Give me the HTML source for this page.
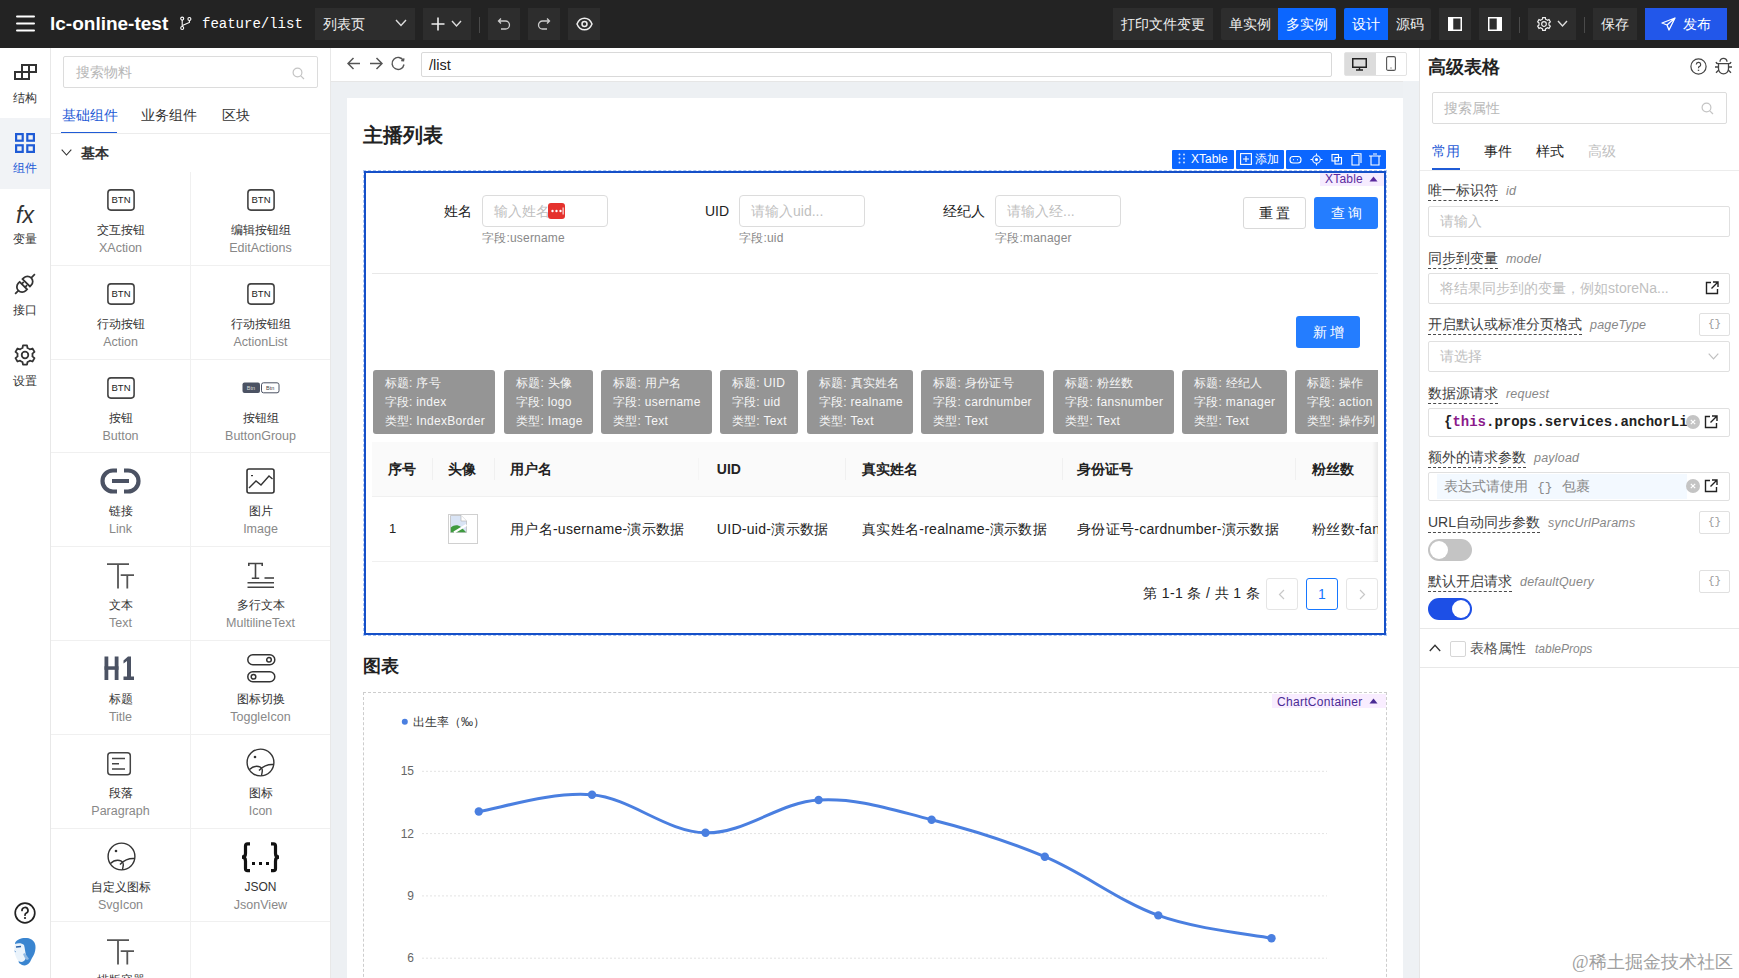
<!DOCTYPE html>
<html><head><meta charset="utf-8">
<style>
*{box-sizing:border-box;margin:0;padding:0}
html,body{width:1739px;height:978px;overflow:hidden;background:#fff;font-family:"Liberation Sans",sans-serif;color:#1d2129;font-size:14px}
.abs{position:absolute}
#top{position:absolute;left:0;top:0;width:1739px;height:48px;background:#232323;color:#fff}
.tb{position:absolute;top:8px;height:32px;background:#2d2d2d;border-radius:0;color:#f0f0f0;font-size:14px;font-weight:500;line-height:32px;text-align:center}
.tb.blue{background:#0b66ff;color:#fff}
.sep{position:absolute;top:17px;width:1px;height:16px;background:#4a4a4a}
#rail{position:absolute;left:0;top:48px;width:51px;height:930px;background:#fff;border-right:1px solid #e8e8e8}
.ri{position:absolute;left:0;width:50px;height:71px;text-align:center;font-size:12px;color:#333}
.ri .lb{position:absolute;left:0;width:50px;top:43px;line-height:14px}
#panel{position:absolute;left:51px;top:48px;width:280px;height:930px;background:#fff;border-right:1px solid #e8e8e8}
#canvas{position:absolute;left:331px;top:48px;width:1089px;height:930px;background:#edf0f3}
#right{position:absolute;left:1419px;top:48px;width:320px;height:930px;background:#fff;border-left:1px solid #e6e6e6}
</style></head><body>
<div id="top">
<svg class="abs" style="left:16px;top:15px" width="19" height="17" viewBox="0 0 19 17"><g stroke="#fff" stroke-width="2" stroke-linecap="round"><line x1="1" y1="1.5" x2="18" y2="1.5"/><line x1="1" y1="8.5" x2="18" y2="8.5"/><line x1="1" y1="15.5" x2="18" y2="15.5"/></g></svg>
<div class="abs" style="left:50px;top:12px;font-size:19px;font-weight:bold;line-height:24px;letter-spacing:0;color:#fff">lc-online-test</div>
<svg class="abs" style="left:179px;top:16px" width="13" height="15" viewBox="0 0 13 15"><g stroke="#fff" stroke-width="1.1" fill="none"><circle cx="3.2" cy="2.6" r="1.5"/><circle cx="3.2" cy="12" r="1.5"/><circle cx="10.4" cy="3" r="1.5"/><line x1="3.2" y1="4.1" x2="3.2" y2="10.5"/><path d="M10.4 4.5 V6.5 L3.4 9.5"/></g></svg>
<div class="abs" style="left:202px;top:14px;font-family:'Liberation Mono',monospace;font-size:14px;line-height:20px;color:#fff">feature/list</div>
<div class="tb" style="left:315px;width:100px;text-align:left;padding-left:8px">列表页</div>
<svg class="abs" style="left:395px;top:19px" width="12" height="8" viewBox="0 0 12 8"><path d="M1 1 L6 6.5 L11 1" stroke="#ddd" stroke-width="1.4" fill="none"/></svg>
<div class="tb" style="left:423px;width:48px"></div>
<svg class="abs" style="left:431px;top:17px" width="14" height="14" viewBox="0 0 14 14"><path d="M7 0.5V13.5M0.5 7H13.5" stroke="#eee" stroke-width="1.6"/></svg>
<svg class="abs" style="left:451px;top:20px" width="11" height="8" viewBox="0 0 11 8"><path d="M1 1 L5.5 6 L10 1" stroke="#ddd" stroke-width="1.4" fill="none"/></svg>
<div class="sep" style="left:479px"></div>
<div class="tb" style="left:488px;width:32px"></div>
<svg class="abs" style="left:497px;top:17px" width="14" height="14" viewBox="0 0 14 14"><path d="M4 1.5 L1.5 4 L4 6.5 M1.8 4 H8.5 A4 4 0 0 1 8.5 12 H4" stroke="#ccc" stroke-width="1.3" fill="none"/></svg>
<div class="tb" style="left:528px;width:32px"></div>
<svg class="abs" style="left:537px;top:17px" width="14" height="14" viewBox="0 0 14 14"><path d="M10 1.5 L12.5 4 L10 6.5 M12.2 4 H5.5 A4 4 0 0 0 5.5 12 H10" stroke="#ccc" stroke-width="1.3" fill="none"/></svg>
<div class="tb" style="left:568px;width:32px"></div>
<svg class="abs" style="left:576px;top:17px" width="17" height="14" viewBox="0 0 17 14"><path d="M1 7 C3 2 6 1.2 8.5 1.2 C11 1.2 14 2 16 7 C14 12 11 12.8 8.5 12.8 C6 12.8 3 12 1 7Z" stroke="#eee" stroke-width="1.5" fill="none"/><circle cx="8.5" cy="7" r="2.5" stroke="#eee" stroke-width="1.5" fill="none"/></svg>

<div class="tb" style="left:1113px;width:100px">打印文件变更</div>
<div class="tb" style="left:1221px;width:57px;border-radius:2px 0 0 2px">单实例</div>
<div class="tb blue" style="left:1278px;width:58px;border-radius:0 2px 2px 0">多实例</div>
<div class="tb blue" style="left:1344px;width:44px;border-radius:2px 0 0 2px">设计</div>
<div class="tb" style="left:1388px;width:43px;border-radius:0 2px 2px 0">源码</div>
<div class="tb" style="left:1439px;width:32px"></div>
<svg class="abs" style="left:1448px;top:17px" width="14" height="14" viewBox="0 0 14 14"><rect x="0.75" y="0.75" width="12.5" height="12.5" stroke="#fff" stroke-width="1.5" fill="none"/><rect x="0.75" y="0.75" width="4.5" height="12.5" fill="#fff"/></svg>
<div class="tb" style="left:1479px;width:32px"></div>
<svg class="abs" style="left:1488px;top:17px" width="14" height="14" viewBox="0 0 14 14"><rect x="0.75" y="0.75" width="12.5" height="12.5" stroke="#fff" stroke-width="1.5" fill="none"/><rect x="8.75" y="0.75" width="4.5" height="12.5" fill="#fff"/></svg>
<div class="sep" style="left:1519px"></div>
<div class="tb" style="left:1528px;width:48px"></div>
<svg class="abs" style="left:1536px;top:16px" width="16" height="16" viewBox="0 0 24 24"><path fill="none" stroke="#eee" stroke-width="1.8" d="M12 15.5a3.5 3.5 0 1 0 0-7 3.5 3.5 0 0 0 0 7z"/><path fill="none" stroke="#eee" stroke-width="1.8" d="M19.4 13.5a7.8 7.8 0 0 0 0-3l2.1-1.6-2-3.5-2.5 1a7.7 7.7 0 0 0-2.6-1.5L14 2.3h-4l-.4 2.6A7.7 7.7 0 0 0 7 6.4l-2.5-1-2 3.5 2.1 1.6a7.8 7.8 0 0 0 0 3l-2.1 1.6 2 3.5 2.5-1a7.7 7.7 0 0 0 2.6 1.5l.4 2.6h4l.4-2.6a7.7 7.7 0 0 0 2.6-1.5l2.5 1 2-3.5z"/></svg>
<svg class="abs" style="left:1557px;top:20px" width="11" height="8" viewBox="0 0 11 8"><path d="M1 1 L5.5 6 L10 1" stroke="#ddd" stroke-width="1.4" fill="none"/></svg>
<div class="sep" style="left:1584px"></div>
<div class="tb" style="left:1593px;width:44px">保存</div>
<div class="tb blue" style="left:1645px;width:82px;background:#2257ea"></div>
<svg class="abs" style="left:1661px;top:17px" width="15" height="14" viewBox="0 0 15 14"><path d="M14 1 L1 6 L6 8 L8 13 Z M6 8 L14 1" stroke="#fff" stroke-width="1.3" fill="none" stroke-linejoin="round"/></svg>
<div class="abs" style="left:1683px;top:8px;line-height:32px;font-size:14px;color:#fff">发布</div>
</div>
<div id="rail">
<svg class="abs" style="left:14px;top:16px" width="23" height="17" viewBox="0 0 23 17"><g stroke="#333" stroke-width="2" fill="none"><rect x="8" y="1" width="7" height="7"/><rect x="15" y="1" width="7" height="7"/><rect x="1" y="8" width="7" height="7"/><rect x="8" y="8" width="7" height="7"/></g></svg>
<div class="abs" style="left:0;top:43px;width:50px;text-align:center;font-size:12px;line-height:14px;color:#333">结构</div>
<div class="abs" style="left:0;top:70px;width:50px;height:71px;background:#f1f3f6"></div>
<svg class="abs" style="left:15px;top:85px" width="20" height="20" viewBox="0 0 20 20"><g stroke="#1f5bd6" stroke-width="2.2" fill="none"><rect x="1.1" y="1.1" width="6.6" height="6.6"/><rect x="12.3" y="1.1" width="6.6" height="6.6"/><rect x="1.1" y="12.3" width="6.6" height="6.6"/><rect x="12.3" y="12.3" width="6.6" height="6.6"/></g></svg>
<div class="abs" style="left:0;top:113px;width:50px;text-align:center;font-size:12px;line-height:14px;color:#1f5bd6">组件</div>
<div class="abs" style="left:0;top:155px;width:50px;text-align:center;font-family:'Liberation Sans',sans-serif;font-style:italic;font-size:23px;line-height:24px;color:#333">fx</div>
<div class="abs" style="left:0;top:184px;width:50px;text-align:center;font-size:12px;line-height:14px;color:#333">变量</div>
<svg class="abs" style="left:11px;top:222px" width="28" height="28" viewBox="0 0 24 24"><g transform="rotate(-45 12 12)" stroke="#333" stroke-width="1.5" fill="none"><path d="M0 12 H4"/><path d="M10 7.5 V16.5 H8.5 A4.5 4.5 0 0 1 8.5 7.5 Z"/><path d="M10 10 H12.5 M10 14 H12.5"/><path d="M13.5 7.5 V16.5 H15 A4.5 4.5 0 0 0 15 7.5 Z"/><path d="M19.5 12 H24"/></g></svg>
<div class="abs" style="left:0;top:255px;width:50px;text-align:center;font-size:12px;line-height:14px;color:#333">接口</div>
<svg class="abs" style="left:13px;top:295px" width="24" height="24" viewBox="0 0 24 24"><path fill="none" stroke="#333" stroke-width="1.8" d="M12 15.3a3.3 3.3 0 1 0 0-6.6 3.3 3.3 0 0 0 0 6.6z"/><path fill="none" stroke="#333" stroke-width="1.8" stroke-linejoin="round" d="M19.4 13.4a7.8 7.8 0 0 0 0-2.8l2.1-1.7-2-3.4-2.6.9a7.7 7.7 0 0 0-2.4-1.4L14 2.3h-4l-.5 2.7A7.7 7.7 0 0 0 7.1 6.4l-2.6-.9-2 3.4 2.1 1.7a7.8 7.8 0 0 0 0 2.8l-2.1 1.7 2 3.4 2.6-.9a7.7 7.7 0 0 0 2.4 1.4l.5 2.7h4l.5-2.7a7.7 7.7 0 0 0 2.4-1.4l2.6.9 2-3.4z"/></svg>
<div class="abs" style="left:0;top:326px;width:50px;text-align:center;font-size:12px;line-height:14px;color:#333">设置</div>
<svg class="abs" style="left:14px;top:854px" width="22" height="22" viewBox="0 0 22 22"><circle cx="11" cy="11" r="9.8" stroke="#222" stroke-width="1.7" fill="none"/><path d="M8 8.5 A3 3 0 1 1 12 11.3 C11.2 11.7 11 12.2 11 13.2" stroke="#222" stroke-width="1.7" fill="none" stroke-linecap="round"/><circle cx="11" cy="16" r="1.1" fill="#222"/></svg>
<svg class="abs" style="left:13px;top:889px" width="24" height="30" viewBox="0 0 24 30"><path d="M2 6 C4 2 9 0.5 14 1 C19 1.5 23 5 22.5 11 C22.3 15 21 18 19 21 L17 25 C15 28 12 29 9 28 L6 26 C5 24 6 22 8 21 C6 20 4 18 3 14 Z" fill="#3a85d0"/><path d="M2 7 C5 6 9 6 11 8 C12 11 12 15 13 18 C13.5 21 12 24 9 25 C6 25 4 23 3 20 C1.5 17 1 13 1.5 10 Z" fill="#eaf3fb"/><path d="M3 10 L8 9.5" stroke="#2c62a8" stroke-width="1.4"/><path d="M10 17 C11 19 12 22 14 23 L16 22 C15 20 13 18 12 16Z" fill="#8fb9e3"/><path d="M1.5 14 L3 15" stroke="#7aa6d6" stroke-width="1"/></svg>
</div>
<div id="panel"><div class="abs" style="left:12px;top:8px;width:255px;height:32px;border:1px solid #dcdcdc;border-radius:2px"></div>
<div class="abs" style="left:25px;top:14px;font-size:14px;line-height:20px;color:#b8b8b8">搜索物料</div>
<svg class="abs" style="left:241px;top:19px" width="13" height="13" viewBox="0 0 13 13"><circle cx="5.5" cy="5.5" r="4.4" stroke="#c4c4c4" stroke-width="1.2" fill="none"/><path d="M8.8 8.8 L12 12" stroke="#c4c4c4" stroke-width="1.2"/></svg>
<div class="abs" style="left:11px;top:57px;font-size:14px;line-height:20px;color:#1f5bd6;font-weight:500">基础组件</div>
<div class="abs" style="left:10px;top:84px;width:56px;height:2px;background:#1f5bd6"></div>
<div class="abs" style="left:90px;top:57px;font-size:14px;line-height:20px;color:#333">业务组件</div>
<div class="abs" style="left:171px;top:57px;font-size:14px;line-height:20px;color:#333">区块</div>
<div class="abs" style="left:0;top:85px;width:279px;height:1px;background:#ececec"></div>
<svg class="abs" style="left:10px;top:101px" width="11" height="7" viewBox="0 0 11 7"><path d="M0.7 0.7 L5.5 6 L10.3 0.7" stroke="#333" stroke-width="1.1" fill="none"/></svg>
<div class="abs" style="left:30px;top:95px;font-size:14px;line-height:20px;font-weight:bold;color:#333">基本</div>

<div class="abs" style="left:0px;top:124.0px;width:140px;height:93.8px;border-right:1px solid #f0f0f0;border-bottom:1px solid #f0f0f0"></div>
<div class="abs" style="left:140px;top:124.0px;width:139px;height:93.8px;border-bottom:1px solid #f0f0f0"></div>
<div class="abs" style="left:0px;top:217.8px;width:140px;height:93.8px;border-right:1px solid #f0f0f0;border-bottom:1px solid #f0f0f0"></div>
<div class="abs" style="left:140px;top:217.8px;width:139px;height:93.8px;border-bottom:1px solid #f0f0f0"></div>
<div class="abs" style="left:0px;top:311.6px;width:140px;height:93.8px;border-right:1px solid #f0f0f0;border-bottom:1px solid #f0f0f0"></div>
<div class="abs" style="left:140px;top:311.6px;width:139px;height:93.8px;border-bottom:1px solid #f0f0f0"></div>
<div class="abs" style="left:0px;top:405.4px;width:140px;height:93.8px;border-right:1px solid #f0f0f0;border-bottom:1px solid #f0f0f0"></div>
<div class="abs" style="left:140px;top:405.4px;width:139px;height:93.8px;border-bottom:1px solid #f0f0f0"></div>
<div class="abs" style="left:0px;top:499.2px;width:140px;height:93.8px;border-right:1px solid #f0f0f0;border-bottom:1px solid #f0f0f0"></div>
<div class="abs" style="left:140px;top:499.2px;width:139px;height:93.8px;border-bottom:1px solid #f0f0f0"></div>
<div class="abs" style="left:0px;top:593.0px;width:140px;height:93.8px;border-right:1px solid #f0f0f0;border-bottom:1px solid #f0f0f0"></div>
<div class="abs" style="left:140px;top:593.0px;width:139px;height:93.8px;border-bottom:1px solid #f0f0f0"></div>
<div class="abs" style="left:0px;top:686.8px;width:140px;height:93.8px;border-right:1px solid #f0f0f0;border-bottom:1px solid #f0f0f0"></div>
<div class="abs" style="left:140px;top:686.8px;width:139px;height:93.8px;border-bottom:1px solid #f0f0f0"></div>
<div class="abs" style="left:0px;top:780.6px;width:140px;height:93.8px;border-right:1px solid #f0f0f0;border-bottom:1px solid #f0f0f0"></div>
<div class="abs" style="left:140px;top:780.6px;width:139px;height:93.8px;border-bottom:1px solid #f0f0f0"></div>
<div class="abs" style="left:0px;top:874.4px;width:140px;height:93.8px;border-right:1px solid #f0f0f0;border-bottom:1px solid #f0f0f0"></div>
<div class="abs" style="left:140px;top:874.4px;width:139px;height:93.8px;border-bottom:1px solid #f0f0f0"></div>
<div class="abs" style="left:56px;top:141px"><svg width="28" height="22" viewBox="0 0 28 22"><rect x="0.9" y="0.9" width="26.2" height="20.2" rx="3" stroke="#444" stroke-width="1.6" fill="none"/><text x="14" y="14.2" text-anchor="middle" font-family="Liberation Sans" font-size="9.5" fill="#222">BTN</text></svg></div>
<div class="abs" style="left:196px;top:141px"><svg width="28" height="22" viewBox="0 0 28 22"><rect x="0.9" y="0.9" width="26.2" height="20.2" rx="3" stroke="#444" stroke-width="1.6" fill="none"/><text x="14" y="14.2" text-anchor="middle" font-family="Liberation Sans" font-size="9.5" fill="#222">BTN</text></svg></div>
<div class="abs" style="left:56px;top:235px"><svg width="28" height="22" viewBox="0 0 28 22"><rect x="0.9" y="0.9" width="26.2" height="20.2" rx="3" stroke="#444" stroke-width="1.6" fill="none"/><text x="14" y="14.2" text-anchor="middle" font-family="Liberation Sans" font-size="9.5" fill="#222">BTN</text></svg></div>
<div class="abs" style="left:196px;top:235px"><svg width="28" height="22" viewBox="0 0 28 22"><rect x="0.9" y="0.9" width="26.2" height="20.2" rx="3" stroke="#444" stroke-width="1.6" fill="none"/><text x="14" y="14.2" text-anchor="middle" font-family="Liberation Sans" font-size="9.5" fill="#222">BTN</text></svg></div>
<div class="abs" style="left:56px;top:329px"><svg width="28" height="22" viewBox="0 0 28 22"><rect x="0.9" y="0.9" width="26.2" height="20.2" rx="3" stroke="#444" stroke-width="1.6" fill="none"/><text x="14" y="14.2" text-anchor="middle" font-family="Liberation Sans" font-size="9.5" fill="#222">BTN</text></svg></div>
<div class="abs" style="left:191px;top:333px"><svg width="38" height="12" viewBox="0 0 38 12"><rect x="0.5" y="0.5" width="17.5" height="10.5" rx="2" fill="#4b5263"/><text x="9" y="8" text-anchor="middle" font-family="Liberation Sans" font-size="5.5" fill="#ddd">Btn</text><rect x="19.5" y="0.8" width="17.5" height="10" rx="2" stroke="#4b5263" stroke-width="1" fill="#fff"/><text x="28.2" y="8" text-anchor="middle" font-family="Liberation Sans" font-size="5.5" fill="#444">Btn</text></svg></div>
<div class="abs" style="left:49px;top:420px"><svg width="41" height="26" viewBox="0 0 41 26"><path d="M17 2.5 H13 A10.5 10.5 0 0 0 13 23.5 H17 M24 2.5 H28 A10.5 10.5 0 0 1 28 23.5 H24" stroke="#4b5263" stroke-width="4.2" fill="none"/><rect x="12" y="11" width="17" height="4" fill="#4b5263"/></svg></div>
<div class="abs" style="left:195px;top:420px"><svg width="29" height="26" viewBox="0 0 29 26"><rect x="1" y="1" width="27" height="24" rx="2" stroke="#333" stroke-width="1.6" fill="none"/><path d="M3 20 L10 13 L15 17 L23 8 L26.5 11" stroke="#333" stroke-width="1.4" fill="none"/><rect x="5" y="7" width="2" height="1.2" fill="#333"/></svg></div>
<div class="abs" style="left:56px;top:515px"><svg width="28" height="28" viewBox="0 0 28 28"><g stroke="#555" stroke-width="1.8" fill="none"><path d="M0 1.2 H22 M11 1.2 V25.5"/><path d="M13.7 12.2 H27 M20.3 12.2 V25.5"/></g></svg></div>
<div class="abs" style="left:196px;top:514px"><svg width="28" height="27" viewBox="0 0 28 27"><g stroke="#444" stroke-width="1.6" fill="none"><path d="M1.8 4 V1.5 H15.2 V4 M8.5 1.5 V16.3 M4.8 16.3 H12.2"/><path d="M17.5 16 H27"/><path d="M0.5 20.8 H27 M0.5 25.3 H27"/></g></svg></div>
<div class="abs" style="left:53px;top:608px"><svg width="31" height="25" viewBox="0 0 31 25"><g fill="#4b5263"><rect x="0.5" y="0.5" width="3.8" height="23.5"/><rect x="10.7" y="0.5" width="3.8" height="23.5"/><rect x="0.5" y="10.3" width="14" height="3.5"/><path d="M19.5 4.5 L24 0.5 H27 V20.5 H30 V24 H19.5 V20.5 H23 V5 L19.5 7.5Z"/></g></svg></div>
<div class="abs" style="left:196px;top:606px"><svg width="29" height="29" viewBox="0 0 29 29"><g stroke="#333" stroke-width="1.5" fill="none"><rect x="0.8" y="0.8" width="27" height="10" rx="5"/><circle cx="22" cy="5.8" r="2.3"/><rect x="0.8" y="17.8" width="27" height="10" rx="5"/><circle cx="6.5" cy="22.8" r="2.3"/></g></svg></div>
<div class="abs" style="left:56px;top:704px"><svg width="25" height="24" viewBox="0 0 25 24"><g stroke="#444" stroke-width="1.5" fill="none"><rect x="0.8" y="0.8" width="22.5" height="22" rx="3"/><path d="M5 6.5 H18 M5 11.8 H12 M5 17 H18"/></g></svg></div>
<div class="abs" style="left:195px;top:700px"><svg width="29" height="29" viewBox="0 0 29 29"><g stroke="#333" stroke-width="1.4" fill="none"><circle cx="14.5" cy="14.5" r="13.4"/><path d="M3.5 21.5 C8 17 14 17.5 16 21 C17 23 15.5 26 15.5 27.8"/><path d="M13 22.5 C16 18.5 22 16 27.5 16.5"/></g><circle cx="9" cy="9" r="1.3" fill="#333"/></svg></div>
<div class="abs" style="left:56px;top:794px"><svg width="29" height="29" viewBox="0 0 29 29"><g stroke="#333" stroke-width="1.4" fill="none"><circle cx="14.5" cy="14.5" r="13.4"/><path d="M3.5 21.5 C8 17 14 17.5 16 21 C17 23 15.5 26 15.5 27.8"/><path d="M13 22.5 C16 18.5 22 16 27.5 16.5"/></g><circle cx="9" cy="9" r="1.3" fill="#333"/></svg></div>
<div class="abs" style="left:189px;top:794px"><svg width="41" height="31" viewBox="0 0 41 31"><g fill="none" stroke="#111" stroke-width="3.2" stroke-linejoin="miter"><path d="M10 1.8 H7.5 Q5.5 1.8 5.5 4 V11.5 Q5.5 15.2 2 15.2 Q5.5 15.2 5.5 19 V26.5 Q5.5 28.7 7.5 28.7 H10"/><path d="M31 1.8 H33.5 Q35.5 1.8 35.5 4 V11.5 Q35.5 15.2 39 15.2 Q35.5 15.2 35.5 19 V26.5 Q35.5 28.7 33.5 28.7 H31"/></g><g fill="#111"><rect x="12" y="20" width="3" height="3"/><rect x="19" y="20" width="3" height="3"/><rect x="26" y="20" width="3" height="3"/></g></svg></div>
<div class="abs" style="left:56px;top:891px"><svg width="28" height="28" viewBox="0 0 28 28"><g stroke="#555" stroke-width="1.8" fill="none"><path d="M0 1.2 H22 M11 1.2 V25.5"/><path d="M13.7 12.2 H27 M20.3 12.2 V25.5"/></g></svg></div>
<div class="abs" style="left:0px;top:174.0px;width:139px;text-align:center;font-size:12px;line-height:17px;color:#333">交互按钮</div>
<div class="abs" style="left:0px;top:192.0px;width:139px;text-align:center;font-size:12.5px;line-height:17px;color:#888">XAction</div>
<div class="abs" style="left:140px;top:174.0px;width:139px;text-align:center;font-size:12px;line-height:17px;color:#333">编辑按钮组</div>
<div class="abs" style="left:140px;top:192.0px;width:139px;text-align:center;font-size:12.5px;line-height:17px;color:#888">EditActions</div>
<div class="abs" style="left:0px;top:267.8px;width:139px;text-align:center;font-size:12px;line-height:17px;color:#333">行动按钮</div>
<div class="abs" style="left:0px;top:285.8px;width:139px;text-align:center;font-size:12.5px;line-height:17px;color:#888">Action</div>
<div class="abs" style="left:140px;top:267.8px;width:139px;text-align:center;font-size:12px;line-height:17px;color:#333">行动按钮组</div>
<div class="abs" style="left:140px;top:285.8px;width:139px;text-align:center;font-size:12.5px;line-height:17px;color:#888">ActionList</div>
<div class="abs" style="left:0px;top:361.6px;width:139px;text-align:center;font-size:12px;line-height:17px;color:#333">按钮</div>
<div class="abs" style="left:0px;top:379.6px;width:139px;text-align:center;font-size:12.5px;line-height:17px;color:#888">Button</div>
<div class="abs" style="left:140px;top:361.6px;width:139px;text-align:center;font-size:12px;line-height:17px;color:#333">按钮组</div>
<div class="abs" style="left:140px;top:379.6px;width:139px;text-align:center;font-size:12.5px;line-height:17px;color:#888">ButtonGroup</div>
<div class="abs" style="left:0px;top:455.4px;width:139px;text-align:center;font-size:12px;line-height:17px;color:#333">链接</div>
<div class="abs" style="left:0px;top:473.4px;width:139px;text-align:center;font-size:12.5px;line-height:17px;color:#888">Link</div>
<div class="abs" style="left:140px;top:455.4px;width:139px;text-align:center;font-size:12px;line-height:17px;color:#333">图片</div>
<div class="abs" style="left:140px;top:473.4px;width:139px;text-align:center;font-size:12.5px;line-height:17px;color:#888">Image</div>
<div class="abs" style="left:0px;top:549.2px;width:139px;text-align:center;font-size:12px;line-height:17px;color:#333">文本</div>
<div class="abs" style="left:0px;top:567.2px;width:139px;text-align:center;font-size:12.5px;line-height:17px;color:#888">Text</div>
<div class="abs" style="left:140px;top:549.2px;width:139px;text-align:center;font-size:12px;line-height:17px;color:#333">多行文本</div>
<div class="abs" style="left:140px;top:567.2px;width:139px;text-align:center;font-size:12.5px;line-height:17px;color:#888">MultilineText</div>
<div class="abs" style="left:0px;top:643.0px;width:139px;text-align:center;font-size:12px;line-height:17px;color:#333">标题</div>
<div class="abs" style="left:0px;top:661.0px;width:139px;text-align:center;font-size:12.5px;line-height:17px;color:#888">Title</div>
<div class="abs" style="left:140px;top:643.0px;width:139px;text-align:center;font-size:12px;line-height:17px;color:#333">图标切换</div>
<div class="abs" style="left:140px;top:661.0px;width:139px;text-align:center;font-size:12.5px;line-height:17px;color:#888">ToggleIcon</div>
<div class="abs" style="left:0px;top:736.8px;width:139px;text-align:center;font-size:12px;line-height:17px;color:#333">段落</div>
<div class="abs" style="left:0px;top:754.8px;width:139px;text-align:center;font-size:12.5px;line-height:17px;color:#888">Paragraph</div>
<div class="abs" style="left:140px;top:736.8px;width:139px;text-align:center;font-size:12px;line-height:17px;color:#333">图标</div>
<div class="abs" style="left:140px;top:754.8px;width:139px;text-align:center;font-size:12.5px;line-height:17px;color:#888">Icon</div>
<div class="abs" style="left:0px;top:830.6px;width:139px;text-align:center;font-size:12px;line-height:17px;color:#333">自定义图标</div>
<div class="abs" style="left:0px;top:848.6px;width:139px;text-align:center;font-size:12.5px;line-height:17px;color:#888">SvgIcon</div>
<div class="abs" style="left:140px;top:830.6px;width:139px;text-align:center;font-size:12px;line-height:17px;color:#333">JSON</div>
<div class="abs" style="left:140px;top:848.6px;width:139px;text-align:center;font-size:12.5px;line-height:17px;color:#888">JsonView</div>
<div class="abs" style="left:0px;top:924.4px;width:139px;text-align:center;font-size:12px;line-height:17px;color:#333">排版容器</div></div>
<div id="canvas"><div class="abs" style="left:0;top:0;width:1089px;height:34px;background:#fff;border-bottom:1px solid #e6e6e6"></div>
<svg class="abs" style="left:16px;top:9px" width="14" height="13" viewBox="0 0 14 13"><path d="M6.5 1 L1 6.5 L6.5 12 M1.3 6.5 H13" stroke="#555" stroke-width="1.5" fill="none"/></svg>
<svg class="abs" style="left:38px;top:9px" width="14" height="13" viewBox="0 0 14 13"><path d="M7.5 1 L13 6.5 L7.5 12 M12.7 6.5 H1" stroke="#555" stroke-width="1.5" fill="none"/></svg>
<svg class="abs" style="left:59px;top:8px" width="16" height="16" viewBox="0 0 16 16"><path d="M13.4 4.6 A6 6 0 1 0 14 8.5" stroke="#555" stroke-width="1.4" fill="none"/><path d="M13.9 2.3 L13.5 4.8 L11.2 4.6" stroke="#555" stroke-width="1.4" fill="none"/></svg>
<div class="abs" style="left:90px;top:4px;width:911px;height:25px;border:1px solid #d9d9d9;border-radius:2px;background:#fff"></div>
<div class="abs" style="left:98px;top:7px;font-size:14.5px;line-height:21px;color:#222">/list</div>
<div class="abs" style="left:1013px;top:4px;width:63px;height:24px;border:1px solid #e3e3e3;border-radius:2px;background:#fff"></div>
<div class="abs" style="left:1014px;top:5px;width:31px;height:22px;background:#dcdcdc"></div>
<svg class="abs" style="left:1021px;top:10px" width="15" height="13" viewBox="0 0 15 13"><rect x="0.75" y="0.75" width="13.5" height="8.5" stroke="#222" stroke-width="1.5" fill="none"/><path d="M7.5 9.5 V11.5 M4 12 H11" stroke="#222" stroke-width="1.4"/></svg>
<svg class="abs" style="left:1055px;top:8px" width="10" height="15" viewBox="0 0 10 15"><rect x="0.6" y="0.6" width="8.8" height="13.8" rx="1.5" stroke="#555" stroke-width="1.1" fill="none"/><path d="M4.3 12 H5.7" stroke="#555" stroke-width="0.8"/></svg>
<div class="abs" style="left:1072px;top:33px;width:17px;height:897px;background:#eef1f4"></div>
<div id="card" class="abs" style="left:16px;top:50px;width:1056px;height:880px;background:#fff"></div>

<div class="abs" style="left:32px;top:74px;font-size:20px;line-height:26px;font-weight:bold;color:#222">主播列表</div>
<div class="abs" style="left:841px;top:102px;width:62px;height:19px;background:#0b66ff;border-radius:1px"></div>
<svg class="abs" style="left:847px;top:105px" width="8" height="11" viewBox="0 0 8 11"><g fill="#cfe0ff"><circle cx="1.5" cy="1.5" r="1"/><circle cx="6" cy="1.5" r="1"/><circle cx="1.5" cy="5.5" r="1"/><circle cx="6" cy="5.5" r="1"/><circle cx="1.5" cy="9.5" r="1"/><circle cx="6" cy="9.5" r="1"/></g></svg>
<div class="abs" style="left:860px;top:102px;font-size:12px;line-height:19px;color:#fff">XTable</div>
<div class="abs" style="left:905px;top:102px;width:48px;height:19px;background:#0b66ff;border-radius:1px"></div>
<svg class="abs" style="left:909px;top:105px" width="12" height="12" viewBox="0 0 12 12"><rect x="0.6" y="0.6" width="10.8" height="10.8" stroke="#fff" stroke-width="1.1" fill="none"/><path d="M6 3 V9 M3 6 H9" stroke="#fff" stroke-width="1.1"/></svg>
<div class="abs" style="left:924px;top:102px;font-size:12px;line-height:19px;color:#fff">添加</div>
<div class="abs" style="left:955px;top:102px;width:100px;height:19px;background:#0b66ff;border-radius:1px"></div>
<svg class="abs" style="left:958px;top:105px" width="95" height="13" viewBox="0 0 95 13"><g stroke="#fff" stroke-width="1.1" fill="none">
<rect x="1" y="3.5" width="11" height="6.5" rx="3"/><path d="M4 6.7 H5 M8 6.7 H9"/>
<circle cx="27.5" cy="6.5" r="3.8"/><circle cx="27.5" cy="6.5" r="1" fill="#fff"/><path d="M27.5 0.5 V2.5 M27.5 10.5 V12.5 M21.5 6.5 H23.5 M31.5 6.5 H33.5"/>
<rect x="43" y="1.5" width="6.5" height="6.5"/><rect x="46" y="4.5" width="6.5" height="6.5"/>
<path d="M63 2.5 H70 V12 H63 Z M65 0.8 H72 V10"/>
<path d="M80 3 H92 M82 3 V12 H90 V3 M84 1 H88"/></g></svg>

<div class="abs" style="left:33px;top:123px;width:1022px;height:464px;border:2px solid #1550c8;outline:1px dashed #aac6f6;outline-offset:0"></div>
<div class="abs" style="left:989px;top:125px;width:64px;height:13px;background:#f6ecff"></div>
<div class="abs" style="left:994px;top:124px;font-size:12px;line-height:15px;color:#5a2a9e;letter-spacing:0.2px">XTable</div>
<svg class="abs" style="left:1038px;top:128px" width="9" height="6" viewBox="0 0 9 6"><path d="M0.5 5.5 L4.5 0.5 L8.5 5.5Z" fill="#5a2a9e"/></svg>

<div class="abs" style="left:113px;top:153px;font-size:14px;line-height:20px;color:#222">姓名</div>
<div class="abs" style="left:151px;top:147px;width:126px;height:32px;border:1px solid #dcdcdc;border-radius:4px"></div><div class="abs" style="left:163px;top:147px;font-size:14px;line-height:32px;color:#bfbfbf">输入姓名</div>
<div class="abs" style="left:217px;top:155px;width:17px;height:16px;background:#e5322d;border-radius:3px"></div><svg class="abs" style="left:217px;top:155px" width="17" height="16" viewBox="0 0 17 16"><g fill="#fff"><circle cx="4.5" cy="8" r="1.2"/><circle cx="8.5" cy="8" r="1.2"/><circle cx="12.5" cy="8" r="1.2"/></g><rect x="14.6" y="4.5" width="1" height="7" fill="#fff"/></svg>
<div class="abs" style="left:151px;top:182px;font-size:12px;line-height:16px;color:#888;letter-spacing:0.2px">字段:username</div>
<div class="abs" style="left:374px;top:153px;font-size:14px;line-height:20px;color:#222">UID</div>
<div class="abs" style="left:408px;top:147px;width:126px;height:32px;border:1px solid #dcdcdc;border-radius:4px"></div><div class="abs" style="left:420px;top:147px;font-size:14px;line-height:32px;color:#bfbfbf">请输入uid...</div>
<div class="abs" style="left:408px;top:182px;font-size:12px;line-height:16px;color:#888;letter-spacing:0.2px">字段:uid</div>
<div class="abs" style="left:612px;top:153px;font-size:14px;line-height:20px;color:#222">经纪人</div>
<div class="abs" style="left:664px;top:147px;width:126px;height:32px;border:1px solid #dcdcdc;border-radius:4px"></div><div class="abs" style="left:676px;top:147px;font-size:14px;line-height:32px;color:#bfbfbf">请输入经...</div>
<div class="abs" style="left:664px;top:182px;font-size:12px;line-height:16px;color:#888;letter-spacing:0.2px">字段:manager</div>
<div class="abs" style="left:912px;top:149px;width:63px;height:32px;border:1px solid #d9d9d9;border-radius:3px;text-align:center;font-size:14px;line-height:30px;color:#222;letter-spacing:3px;padding-left:3px">重置</div>
<div class="abs" style="left:983px;top:149px;width:64px;height:32px;background:#247dff;border-radius:3px;text-align:center;font-size:14px;line-height:32px;color:#fff;letter-spacing:3px;padding-left:3px">查询</div>
<div class="abs" style="left:41px;top:225px;width:1006px;height:1px;background:#e8e8e8"></div>
<div class="abs" style="left:965px;top:268px;width:64px;height:32px;background:#247dff;border-radius:3px;text-align:center;font-size:14px;line-height:32px;color:#fff;letter-spacing:3px;padding-left:3px">新增</div>
<div class="abs" style="left:41px;top:394px;width:1006px;height:55px;background:#fafafa;border-bottom:1px solid #f0f0f0"></div>
<div class="abs" style="left:41px;top:449px;width:1006px;height:65px;border-bottom:1px solid #f0f0f0"></div>
<div class="abs" style="left:1041px;top:394px;width:6px;height:120px;background:linear-gradient(to right,rgba(0,0,0,0),rgba(0,0,0,0.07))"></div>
<div class="abs" style="left:57px;top:411px;font-size:14px;line-height:20px;font-weight:bold;color:#222">序号</div>
<div class="abs" style="left:116.69999999999999px;top:411px;font-size:14px;line-height:20px;font-weight:bold;color:#222">头像</div>
<div class="abs" style="left:179px;top:411px;font-size:14px;line-height:20px;font-weight:bold;color:#222">用户名</div>
<div class="abs" style="left:385.79999999999995px;top:411px;font-size:14px;line-height:20px;font-weight:bold;color:#222">UID</div>
<div class="abs" style="left:531px;top:411px;font-size:14px;line-height:20px;font-weight:bold;color:#222">真实姓名</div>
<div class="abs" style="left:746px;top:411px;font-size:14px;line-height:20px;font-weight:bold;color:#222">身份证号</div>
<div class="abs" style="left:981px;top:411px;font-size:14px;line-height:20px;font-weight:bold;color:#222">粉丝数</div>
<div class="abs" style="left:100.60000000000002px;top:410px;width:1px;height:22px;background:#f0f0f0"></div>
<div class="abs" style="left:162.5px;top:410px;width:1px;height:22px;background:#f0f0f0"></div>
<div class="abs" style="left:367px;top:410px;width:1px;height:22px;background:#f5f5f5"></div>
<div class="abs" style="left:514px;top:410px;width:1px;height:22px;background:#f0f0f0"></div>
<div class="abs" style="left:730.8px;top:410px;width:1px;height:22px;background:#f0f0f0"></div>
<div class="abs" style="left:964px;top:410px;width:1px;height:22px;background:#f0f0f0"></div>
<div class="abs" style="left:58px;top:471px;font-size:13px;line-height:20px;color:#222">1</div>
<div class="abs" style="left:117px;top:466px;width:30px;height:30px;border:1px solid #d0d0d0"></div>
<svg class="abs" style="left:119px;top:467px" width="17" height="18" viewBox="0 0 17 18"><path d="M0.5 0.5 H11 L16.5 6 V17.5 H0.5Z" fill="#d9e4f5" stroke="#b8b8b8" stroke-width="0.7"/><path d="M11 0.5 V6 H16.5" fill="#fff" stroke="#b8b8b8" stroke-width="0.7"/><path d="M0.8 17.2 V12.5 C4 9.5 8 9.5 11 12 L16.2 17.2Z" fill="#3f9b3f"/><path d="M4 17.5 L16.5 10" stroke="#fff" stroke-width="2.2"/></svg>
<div class="abs" style="left:41px;top:449px;width:1006px;height:65px;overflow:hidden">
<div class="abs" style="left:138px;top:22px;font-size:14px;line-height:20px;color:#222;white-space:nowrap;letter-spacing:0.3px">用户名-username-演示数据</div>
<div class="abs" style="left:344.79999999999995px;top:22px;font-size:14px;line-height:20px;color:#222;white-space:nowrap;letter-spacing:0.3px">UID-uid-演示数据</div>
<div class="abs" style="left:490px;top:22px;font-size:14px;line-height:20px;color:#222;white-space:nowrap;letter-spacing:0.3px">真实姓名-realname-演示数据</div>
<div class="abs" style="left:705px;top:22px;font-size:14px;line-height:20px;color:#222;white-space:nowrap;letter-spacing:0.3px">身份证号-cardnumber-演示数据</div>
<div class="abs" style="left:940px;top:22px;font-size:14px;line-height:20px;color:#222;white-space:nowrap;letter-spacing:0.3px">粉丝数-fansnumber</div>
</div>
<div class="abs" style="left:41px;top:322px;width:1006px;height:65px;overflow:hidden">
<div class="abs" style="left:0.5px;top:0;width:122.8px;height:64px;background:#959595;border-radius:3px;color:#f7f7f7;font-size:12px;line-height:19px;padding:4px 0 0 12px;white-space:nowrap;letter-spacing:0.3px">标题: 序号<br>字段: index<br>类型: IndexBorder</div>
<div class="abs" style="left:132.0px;top:0;width:88.6px;height:64px;background:#959595;border-radius:3px;color:#f7f7f7;font-size:12px;line-height:19px;padding:4px 0 0 12px;white-space:nowrap;letter-spacing:0.3px">标题: 头像<br>字段: logo<br>类型: Image</div>
<div class="abs" style="left:229.0px;top:0;width:110.5px;height:64px;background:#959595;border-radius:3px;color:#f7f7f7;font-size:12px;line-height:19px;padding:4px 0 0 12px;white-space:nowrap;letter-spacing:0.3px">标题: 用户名<br>字段: username<br>类型: Text</div>
<div class="abs" style="left:347.7px;top:0;width:78.7px;height:64px;background:#959595;border-radius:3px;color:#f7f7f7;font-size:12px;line-height:19px;padding:4px 0 0 12px;white-space:nowrap;letter-spacing:0.3px">标题: UID<br>字段: uid<br>类型: Text</div>
<div class="abs" style="left:434.7px;top:0;width:106.3px;height:64px;background:#959595;border-radius:3px;color:#f7f7f7;font-size:12px;line-height:19px;padding:4px 0 0 12px;white-space:nowrap;letter-spacing:0.3px">标题: 真实姓名<br>字段: realname<br>类型: Text</div>
<div class="abs" style="left:549.0px;top:0;width:123.0px;height:64px;background:#959595;border-radius:3px;color:#f7f7f7;font-size:12px;line-height:19px;padding:4px 0 0 12px;white-space:nowrap;letter-spacing:0.3px">标题: 身份证号<br>字段: cardnumber<br>类型: Text</div>
<div class="abs" style="left:681.0px;top:0;width:121.0px;height:64px;background:#959595;border-radius:3px;color:#f7f7f7;font-size:12px;line-height:19px;padding:4px 0 0 12px;white-space:nowrap;letter-spacing:0.3px">标题: 粉丝数<br>字段: fansnumber<br>类型: Text</div>
<div class="abs" style="left:810.0px;top:0;width:104.6px;height:64px;background:#959595;border-radius:3px;color:#f7f7f7;font-size:12px;line-height:19px;padding:4px 0 0 12px;white-space:nowrap;letter-spacing:0.3px">标题: 经纪人<br>字段: manager<br>类型: Text</div>
<div class="abs" style="left:923.0px;top:0;width:105.0px;height:64px;background:#959595;border-radius:3px;color:#f7f7f7;font-size:12px;line-height:19px;padding:4px 0 0 12px;white-space:nowrap;letter-spacing:0.3px">标题: 操作<br>字段: action<br>类型: 操作列</div>
</div>
<div class="abs" style="left:812px;top:535px;font-size:14px;line-height:20px;color:#222;white-space:nowrap;letter-spacing:0.4px">第 1-1 条 / 共 1 条</div>
<div class="abs" style="left:935px;top:530px;width:32px;height:32px;border:1px solid #e5e5e5;border-radius:3px"></div>
<svg class="abs" style="left:947px;top:541px" width="7" height="11" viewBox="0 0 7 11"><path d="M6 1 L1.5 5.5 L6 10" stroke="#c8c8c8" stroke-width="1.2" fill="none"/></svg>
<div class="abs" style="left:975px;top:530px;width:32px;height:32px;border:1px solid #1677ff;border-radius:3px;text-align:center;font-size:14px;line-height:30px;color:#1677ff">1</div>
<div class="abs" style="left:1015px;top:530px;width:32px;height:32px;border:1px solid #e5e5e5;border-radius:3px"></div>
<svg class="abs" style="left:1028px;top:541px" width="7" height="11" viewBox="0 0 7 11"><path d="M1 1 L5.5 5.5 L1 10" stroke="#c8c8c8" stroke-width="1.2" fill="none"/></svg>
<div class="abs" style="left:32px;top:606px;font-size:18px;line-height:24px;font-weight:bold;color:#222">图表</div>
<div class="abs" style="left:32px;top:644px;width:1024px;height:300px;border:1px dashed #cdcdcd"></div>
<div class="abs" style="left:941px;top:646px;width:114px;height:14px;background:#f9edff"></div>
<div class="abs" style="left:946px;top:646px;font-size:12px;line-height:16px;color:#4a2b94;letter-spacing:0.3px">ChartContainer</div>
<svg class="abs" style="left:1038px;top:650px" width="9" height="6" viewBox="0 0 9 6"><path d="M0.5 5.5 L4.5 0.5 L8.5 5.5Z" fill="#4a2b94"/></svg>
<svg class="abs" style="left:0;top:0" width="1089" height="930" viewBox="331 48 1089 930"><circle cx="404.8" cy="721.8" r="3" fill="#4a7fe0"/><line x1="422" y1="771.3" x2="1327" y2="771.3" stroke="#e3e3e3" stroke-width="1" stroke-dasharray="2 2"/><line x1="422" y1="833.6" x2="1327" y2="833.6" stroke="#e3e3e3" stroke-width="1" stroke-dasharray="2 2"/><line x1="422" y1="895.9" x2="1327" y2="895.9" stroke="#e3e3e3" stroke-width="1" stroke-dasharray="2 2"/><line x1="422" y1="958.2" x2="1327" y2="958.2" stroke="#e3e3e3" stroke-width="1" stroke-dasharray="2 2"/><path d="M478.8 811.5 C498.6 808.6 552.3 791.1 592.0 794.8 C631.7 798.5 665.8 831.9 705.5 832.8 C745.2 833.7 779.0 802.3 818.6 800.0 C858.2 797.7 892.0 809.8 931.6 819.7 C971.2 829.6 1005.1 840.0 1044.8 856.7 C1084.5 873.4 1118.6 901.1 1158.3 915.4 C1198.0 929.7 1251.7 934.2 1271.5 938.2" stroke="#4a7fe0" stroke-width="3" fill="none"/><circle cx="478.8" cy="811.5" r="4.2" fill="#4a7fe0"/><circle cx="592" cy="794.8" r="4.2" fill="#4a7fe0"/><circle cx="705.5" cy="832.8" r="4.2" fill="#4a7fe0"/><circle cx="818.6" cy="800" r="4.2" fill="#4a7fe0"/><circle cx="931.6" cy="819.7" r="4.2" fill="#4a7fe0"/><circle cx="1044.8" cy="856.7" r="4.2" fill="#4a7fe0"/><circle cx="1158.3" cy="915.4" r="4.2" fill="#4a7fe0"/><circle cx="1271.5" cy="938.2" r="4.2" fill="#4a7fe0"/></svg>
<div class="abs" style="left:82px;top:666px;font-size:12px;line-height:16px;color:#333">出生率（‰）</div>
<div class="abs" style="left:49px;top:715.3px;width:34px;text-align:right;font-size:12px;line-height:16px;color:#666">15</div>
<div class="abs" style="left:49px;top:777.6px;width:34px;text-align:right;font-size:12px;line-height:16px;color:#666">12</div>
<div class="abs" style="left:49px;top:839.9px;width:34px;text-align:right;font-size:12px;line-height:16px;color:#666">9</div>
<div class="abs" style="left:49px;top:902.2px;width:34px;text-align:right;font-size:12px;line-height:16px;color:#666">6</div></div>
<div id="right"><div class="abs" style="left:8px;top:7px;font-size:18px;line-height:24px;font-weight:bold;color:#222">高级表格</div>
<svg class="abs" style="left:270px;top:10px" width="17" height="17" viewBox="0 0 17 17"><circle cx="8.5" cy="8.5" r="7.6" stroke="#444" stroke-width="1.2" fill="none"/><path d="M6.3 6.5 A2.2 2.2 0 1 1 9.2 8.6 C8.7 8.9 8.5 9.3 8.5 10.2" stroke="#444" stroke-width="1.2" fill="none"/><path d="M7.8 12.3 H9.2" stroke="#444" stroke-width="1.2"/></svg>
<svg class="abs" style="left:295px;top:9px" width="17" height="18" viewBox="0 0 17 18"><g stroke="#444" stroke-width="1.3" fill="none"><path d="M5 4.8 A3.5 3.5 0 0 1 12 4.8"/><path d="M1 5 C1.3 6.3 2 6.7 3.5 6.7 H13.5 C15 6.7 15.7 6.3 16 5"/><path d="M3.5 6.7 V11.8 A5 5 0 0 0 13.5 11.8 V6.7"/><path d="M0 10 H3.5 M13.5 10 H17 M1 15.8 L3.8 13 M16 15.8 L13.2 13"/></g></svg>
<div class="abs" style="left:12px;top:44px;width:295px;height:32px;border:1px solid #dcdcdc;border-radius:2px"></div>
<div class="abs" style="left:24px;top:50px;font-size:14px;line-height:20px;color:#b8b8b8">搜索属性</div>
<svg class="abs" style="left:281px;top:54px" width="13" height="13" viewBox="0 0 13 13"><circle cx="5.5" cy="5.5" r="4.4" stroke="#c4c4c4" stroke-width="1.2" fill="none"/><path d="M8.8 8.8 L12 12" stroke="#c4c4c4" stroke-width="1.2"/></svg>
<div class="abs" style="left:12px;top:93px;font-size:14px;line-height:20px;color:#1f5bd6;font-weight:500">常用</div>
<div class="abs" style="left:64px;top:93px;font-size:14px;line-height:20px;color:#222">事件</div>
<div class="abs" style="left:116px;top:93px;font-size:14px;line-height:20px;color:#222">样式</div>
<div class="abs" style="left:168px;top:93px;font-size:14px;line-height:20px;color:#c0c0c0">高级</div>
<div class="abs" style="left:12px;top:120px;width:28px;height:2px;background:#1f5bd6"></div>
<div class="abs" style="left:0;top:122px;width:319px;height:1px;background:#ececec"></div>
<div class="abs" style="left:8px;top:132px;font-size:14px;line-height:20px;color:#3d3d3d;white-space:nowrap">唯一标识符<span style="font-style:italic;font-size:12.5px;color:#888;margin-left:8px;letter-spacing:0.2px">id</span></div><div class="abs" style="left:8px;top:152px;width:70px;height:0;border-top:1.5px dashed #4a4a4a"></div>
<div class="abs" style="left:8px;top:158px;width:302px;height:31px;border:1px solid #e0e0e0;border-radius:2px;background:#fff"></div>
<div class="abs" style="left:20px;top:158px;font-size:14px;line-height:31px;color:#bfbfbf;white-space:nowrap;">请输入</div>
<div class="abs" style="left:8px;top:199.5px;font-size:14px;line-height:20px;color:#3d3d3d;white-space:nowrap">同步到变量<span style="font-style:italic;font-size:12.5px;color:#888;margin-left:8px;letter-spacing:0.2px">model</span></div><div class="abs" style="left:8px;top:219.5px;width:70px;height:0;border-top:1.5px dashed #4a4a4a"></div>
<div class="abs" style="left:8px;top:225px;width:302px;height:31px;border:1px solid #e0e0e0;border-radius:2px;background:#fff"></div>
<div class="abs" style="left:20px;top:225px;font-size:14px;line-height:31px;color:#bfbfbf;white-space:nowrap;">将结果同步到的变量，例如storeNa...</div>
<svg class="abs" style="left:285px;top:233px" width="14" height="14" viewBox="0 0 14 14"><path d="M6 1.5 H1.5 V12.5 H12.5 V8" stroke="#222" stroke-width="1.4" fill="none"/><path d="M8 1 H13 V6 M13 1 L6.5 7.5" stroke="#222" stroke-width="1.4" fill="none"/></svg>
<div class="abs" style="left:8px;top:266px;font-size:14px;line-height:20px;color:#3d3d3d;white-space:nowrap">开启默认或标准分页格式<span style="font-style:italic;font-size:12.5px;color:#888;margin-left:8px;letter-spacing:0.2px">pageType</span></div><div class="abs" style="left:8px;top:286px;width:154px;height:0;border-top:1.5px dashed #4a4a4a"></div>
<div class="abs" style="left:279px;top:265px;width:31px;height:23px;border:1px solid #e0e0e0;border-radius:2px;text-align:center;font-family:'Liberation Mono',monospace;font-size:11px;line-height:21px;color:#999;letter-spacing:0px">{}</div>
<div class="abs" style="left:8px;top:293px;width:302px;height:31px;border:1px solid #e0e0e0;border-radius:2px;background:#fff"></div>
<div class="abs" style="left:20px;top:293px;font-size:14px;line-height:31px;color:#bfbfbf;white-space:nowrap;">请选择</div>
<svg class="abs" style="left:288px;top:305px" width="11" height="7" viewBox="0 0 11 7"><path d="M0.7 0.7 L5.5 5.8 L10.3 0.7" stroke="#c0c0c0" stroke-width="1.2" fill="none"/></svg>
<div class="abs" style="left:8px;top:334.5px;font-size:14px;line-height:20px;color:#3d3d3d;white-space:nowrap">数据源请求<span style="font-style:italic;font-size:12.5px;color:#888;margin-left:8px;letter-spacing:0.2px">request</span></div><div class="abs" style="left:8px;top:354.5px;width:70px;height:0;border-top:1.5px dashed #4a4a4a"></div>
<div class="abs" style="left:8px;top:360px;width:302px;height:29px;border:1px solid #e0e0e0;border-radius:2px;background:#fff"></div>
<div class="abs" style="left:24px;top:360px;width:243px;overflow:hidden;font-family:'Liberation Mono',monospace;font-size:14px;line-height:29px;color:#222;white-space:nowrap;font-weight:bold">{<span style="color:#8b1a8b">this</span>.props.services.anchorList}</div>
<svg class="abs" style="left:266px;top:367px" width="14" height="14" viewBox="0 0 14 14"><circle cx="7" cy="7" r="7" fill="#c4c4c4"/><path d="M4.8 4.8 L9.2 9.2 M9.2 4.8 L4.8 9.2" stroke="#fff" stroke-width="1.2"/></svg>
<svg class="abs" style="left:284px;top:367px" width="14" height="14" viewBox="0 0 14 14"><path d="M6 1.5 H1.5 V12.5 H12.5 V8" stroke="#222" stroke-width="1.4" fill="none"/><path d="M8 1 H13 V6 M13 1 L6.5 7.5" stroke="#222" stroke-width="1.4" fill="none"/></svg>
<div class="abs" style="left:8px;top:399px;font-size:14px;line-height:20px;color:#3d3d3d;white-space:nowrap">额外的请求参数<span style="font-style:italic;font-size:12.5px;color:#888;margin-left:8px;letter-spacing:0.2px">payload</span></div><div class="abs" style="left:8px;top:419px;width:98px;height:0;border-top:1.5px dashed #4a4a4a"></div>
<div class="abs" style="left:8px;top:424px;width:302px;height:29px;border:1px solid #e0e0e0;border-radius:2px;background:#fff"></div>
<div class="abs" style="left:17px;top:426px;width:250px;height:25px;background:#f3f9ff"></div>
<div class="abs" style="left:20px;top:424px;font-size:14px;line-height:29px;color:#8a8a8a;white-space:nowrap;padding-left:4px">表达式请使用<span style="font-family:'Liberation Mono',monospace;font-size:13px;margin:0 9px 0 9px">{}</span>包裹</div>
<svg class="abs" style="left:266px;top:431px" width="14" height="14" viewBox="0 0 14 14"><circle cx="7" cy="7" r="7" fill="#c4c4c4"/><path d="M4.8 4.8 L9.2 9.2 M9.2 4.8 L4.8 9.2" stroke="#fff" stroke-width="1.2"/></svg>
<svg class="abs" style="left:284px;top:431px" width="14" height="14" viewBox="0 0 14 14"><path d="M6 1.5 H1.5 V12.5 H12.5 V8" stroke="#222" stroke-width="1.4" fill="none"/><path d="M8 1 H13 V6 M13 1 L6.5 7.5" stroke="#222" stroke-width="1.4" fill="none"/></svg>
<div class="abs" style="left:8px;top:463.5px;font-size:14px;line-height:20px;color:#3d3d3d;white-space:nowrap">URL自动同步参数<span style="font-style:italic;font-size:12.5px;color:#888;margin-left:8px;letter-spacing:0.2px">syncUrlParams</span></div><div class="abs" style="left:8px;top:483.5px;width:112px;height:0;border-top:1.5px dashed #4a4a4a"></div>
<div class="abs" style="left:279px;top:463px;width:31px;height:23px;border:1px solid #e0e0e0;border-radius:2px;text-align:center;font-family:'Liberation Mono',monospace;font-size:11px;line-height:21px;color:#999;letter-spacing:0px">{}</div>
<div class="abs" style="left:8px;top:491px;width:44px;height:22px;border-radius:11px;background:#c4c4c4"></div><div class="abs" style="left:10px;top:493px;width:18px;height:18px;border-radius:9px;background:#fff"></div>
<div class="abs" style="left:8px;top:522.5px;font-size:14px;line-height:20px;color:#3d3d3d;white-space:nowrap">默认开启请求<span style="font-style:italic;font-size:12.5px;color:#888;margin-left:8px;letter-spacing:0.2px">defaultQuery</span></div><div class="abs" style="left:8px;top:542.5px;width:84px;height:0;border-top:1.5px dashed #4a4a4a"></div>
<div class="abs" style="left:279px;top:522px;width:31px;height:23px;border:1px solid #e0e0e0;border-radius:2px;text-align:center;font-family:'Liberation Mono',monospace;font-size:11px;line-height:21px;color:#999;letter-spacing:0px">{}</div>
<div class="abs" style="left:8px;top:550px;width:44px;height:22px;border-radius:11px;background:#1d4fe6"></div><div class="abs" style="left:32px;top:552px;width:18px;height:18px;border-radius:9px;background:#fff"></div>
<div class="abs" style="left:0;top:580px;width:319px;height:1px;background:#e8e8e8"></div>
<svg class="abs" style="left:9px;top:596px" width="12" height="8" viewBox="0 0 12 8"><path d="M0.8 7 L6 1.2 L11.2 7" stroke="#333" stroke-width="1.3" fill="none"/></svg>
<div class="abs" style="left:30px;top:593px;width:16px;height:16px;border:1px solid #d6d6d6;border-radius:2px"></div>
<div class="abs" style="left:50px;top:590px;font-size:14px;line-height:20px;color:#555;white-space:nowrap">表格属性<span style="font-style:italic;font-size:12px;color:#888;margin-left:9px">tableProps</span></div>
<div class="abs" style="left:0;top:619px;width:319px;height:1px;background:#e8e8e8"></div>
<div class="abs" style="left:152px;top:903px;font-family:'Liberation Serif',serif;font-size:18px;line-height:22px;color:#a0a0a0;white-space:nowrap">@稀土掘金技术社区</div></div>
</body></html>
